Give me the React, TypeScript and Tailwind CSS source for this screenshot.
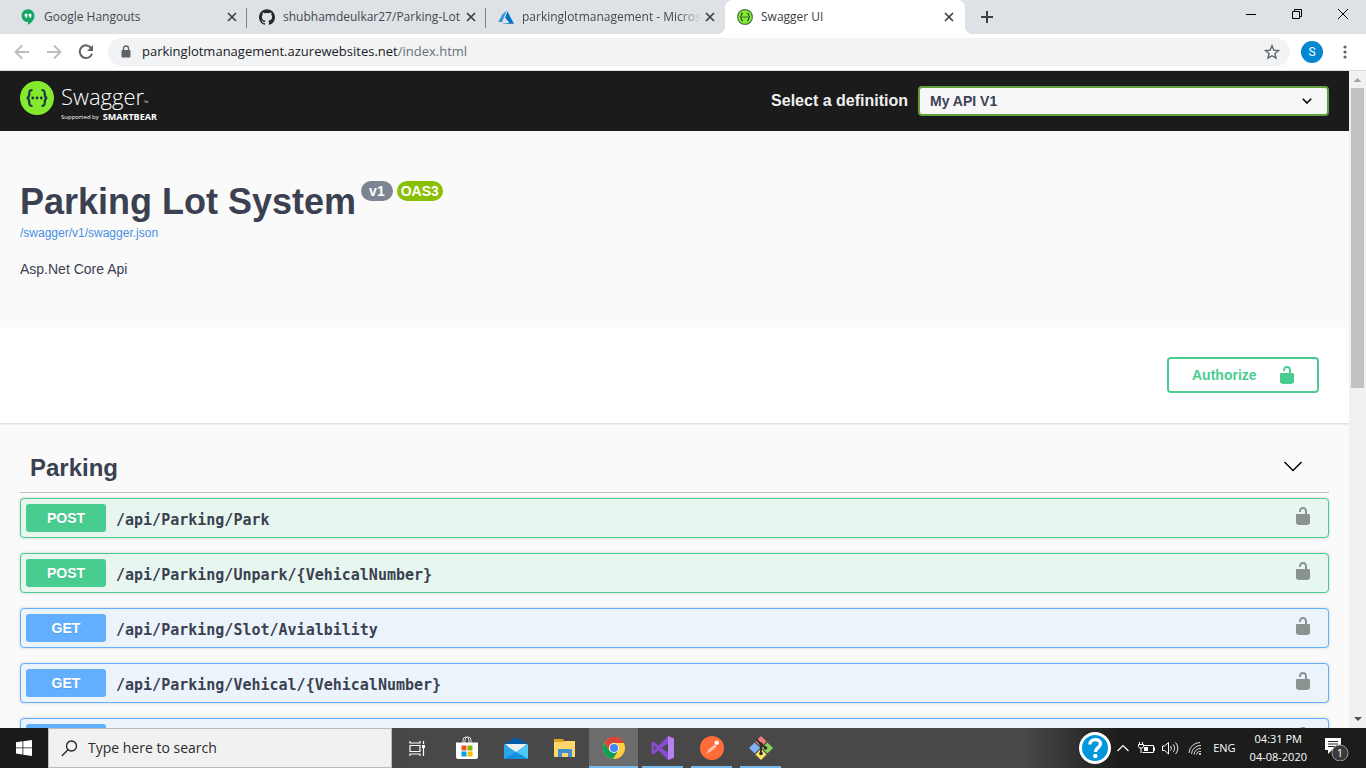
import React from "react";
import { SiGithub } from "react-icons/si";

const sans = "font-['Liberation_Sans',Arial,sans-serif]";
const ui = "font-['Open_Sans','Noto_Sans',sans-serif]";

function CloseX() {
  return (
    <svg viewBox="0 0 10 10" className="size-[10px]" fill="none" stroke="#3c4043" strokeWidth="1.7" aria-hidden="true">
      <path d="M1 1 9 9M9 1 1 9" />
    </svg>
  );
}

function HangoutsIcon() {
  return (
    <svg viewBox="0 0 16 16" className="size-4" aria-hidden="true">
      <path d="M8 .3C4.400.3 1.600 3.100 1.600 6.700c0 3.500 2.800 6.300 6.400 6.300V15.700c3.800-1.900 6.400-5 6.400-9C14.400 3.100 11.500.3 8 .3z" fill="#12a564" />
      <path d="M4.700 4.700h2.700v2.800L6.300 9.100H5.300l.8-1.700H4.700zM8.700 4.700h2.700v2.800l-1.100 1.600h-1l.8-1.700H8.700z" fill="#fff" />
    </svg>
  );
}

function AzureIcon() {
  return (
    <svg viewBox="0 0 16 16" className="size-4" aria-hidden="true">
      <path d="M8.800 1.500 4.300 5.400.200 13h3.900z" fill="#3a94d6" />
      <path d="M9.400 2.300 7.200 8.700l4.200 5-7.900 1.100H16z" fill="#0072c6" />
    </svg>
  );
}

function SwaggerMark({ small = false }: { small?: boolean }) {
  return (
    <svg viewBox="0 0 34 34" className={small ? "size-4" : "size-[34px]"} aria-hidden="true">
      <circle cx="17" cy="17" r="17" fill={small ? "#4a7a45" : "#85ea2d"} />
      {small && <circle cx="17" cy="17" r="14.500" fill="#85ea2d" />}
      <g fill="none" stroke="#173647" strokeWidth="2.200">
        <path d="M12.500 9c-3 0-3.200 1-3.200 3.400 0 2.600 0 4.100-2.400 4.600 2.400.5 2.400 2 2.400 4.600 0 2.400.2 3.400 3.200 3.400" />
        <path d="M21.500 9c3 0 3.200 1 3.200 3.400 0 2.600 0 4.100 2.400 4.600-2.400.5-2.400 2-2.400 4.600 0 2.400-.2 3.400-3.200 3.400" />
      </g>
      <g fill="#173647">
        <circle cx="12.700" cy="17" r="1.400" />
        <circle cx="17" cy="17" r="1.400" />
        <circle cx="21.300" cy="17" r="1.400" />
      </g>
    </svg>
  );
}

function Unlock() {
  return (
    <svg viewBox="0 0 20 20" className="size-5" fill="currentColor" aria-hidden="true">
      <path d="M15.800 8H14V5.600C14 2.703 12.665 1 10 1 7.334 1 6 2.703 6 5.600V6h2v-.801C8 3.754 8.797 3 10 3c1.203 0 2 .754 2 2.199V8H4c-.553 0-1 .646-1 1.199V17c0 .549.428 1.139.951 1.307l1.197.387C5.672 18.861 6.550 19 7.100 19h5.800c.549 0 1.428-.139 1.951-.307l1.196-.387c.524-.167.953-.757.953-1.306V9.199C17 8.646 16.352 8 15.800 8z" />
    </svg>
  );
}

function Tab({ icon, title, divider, wide }: { icon: React.ReactNode; title: string; divider?: boolean; wide?: boolean }) {
  return (
    <div className="relative flex w-[239px] items-center pl-3 pr-[10px]">
      {icon}
      <span className={"ml-2 min-w-0 flex-1 overflow-hidden whitespace-nowrap text-xs text-[#45494d] " + (wide ? "[mask-image:linear-gradient(to_right,#000_88%,transparent)]" : "")}>{title}</span>
      <button aria-label={"Close " + title} className="ml-1"><CloseX /></button>
      {divider && <span className="absolute right-0 top-2 h-5 w-px bg-[#80868b]" />}
    </div>
  );
}

function BrowserChrome() {
  return (
    <header className={ui + " shrink-0"}>
      <div className="flex h-[34px] bg-[#dee1e6] pl-2">
        <Tab icon={<HangoutsIcon />} title="Google Hangouts" divider />
        <Tab icon={<SiGithub className="size-4 text-[#24292e]" />} title="shubhamdeulkar27/Parking-Lot" divider />
        <Tab icon={<AzureIcon />} title="parkinglotmanagement - Microsoft Azure" wide />
        <div className="relative flex w-[240px] items-center rounded-t-lg bg-white pl-3 pr-[11px]">
          <span className="absolute -left-2 bottom-0 size-2 bg-[radial-gradient(circle_at_0_0,#dee1e6_8px,#fff_8px)]" />
          <span className="absolute -right-2 bottom-0 size-2 bg-[radial-gradient(circle_at_100%_0,#dee1e6_8px,#fff_8px)]" />
          <SwaggerMark small />
          <span className="ml-2 flex-1 text-xs text-[#3c4043]">Swagger UI</span>
          <button aria-label="Close Swagger UI"><CloseX /></button>
        </div>
        <button aria-label="New tab" className="ml-4 self-center">
          <svg viewBox="0 0 12 12" className="size-3" stroke="#3c4043" strokeWidth="2"><path d="M6 0v12M0 6h12" /></svg>
        </button>
        <div className="ml-auto flex h-7 items-center gap-9 pr-[18px]">
          <button aria-label="Minimize"><svg viewBox="0 0 10 10" className="size-[10px]" stroke="#000"><path d="M0 5.500h10" /></svg></button>
          <button aria-label="Restore"><svg viewBox="0 0 10 10" className="size-[10px]" fill="none" stroke="#000"><path d="M.5 2.500h7v7h-7zM2.500 2.500v-2h7v7h-2" /></svg></button>
          <button aria-label="Close window"><svg viewBox="0 0 10 10" className="size-[10px]" stroke="#000"><path d="M0 0 10 10M10 0 0 10" /></svg></button>
        </div>
      </div>
      <div className="flex h-[37px] items-center border-b border-[#dadce0] bg-white pl-[14px] pr-[14px]">
        <button aria-label="Back" className="mr-4"><svg viewBox="0 0 16 16" className="size-4" fill="none" stroke="#babcbe" strokeWidth="1.800"><path d="M15 8H2M8 1.500 1.500 8 8 14.500" /></svg></button>
        <button aria-label="Forward" className="mr-4"><svg viewBox="0 0 16 16" className="size-4" fill="none" stroke="#babcbe" strokeWidth="1.800"><path d="M1 8h13M8 1.500 14.500 8 8 14.500" /></svg></button>
        <button aria-label="Reload" className="mr-[14px]"><svg viewBox="0 0 16 16" className="size-4" fill="none" stroke="#5f6368" strokeWidth="2"><path d="M13.300 4.200A6.300 6.300 0 1 0 14 9.700" /><path d="M15 1v6H9z" fill="#5f6368" stroke="none" /></svg></button>
        <div className="flex h-7 flex-1 items-center rounded-full bg-[#f1f3f4] pl-3 pr-[10px]">
          <svg viewBox="0 0 12 14" className="h-[14px] w-3" aria-hidden="true"><path d="M3.500 6V3.500a2.500 2.500 0 0 1 5 0V6" fill="none" stroke="#5f6368" strokeWidth="1.400" /><rect x="1.500" y="5" width="9" height="7.500" rx="1" fill="#5f6368" /></svg>
          <span className="ml-[10px] flex-1 text-[13px] text-[#202124]">parkinglotmanagement.azurewebsites.net<span className="text-[#6b6f74]">/index.html</span></span>
          <button aria-label="Bookmark this page"><svg viewBox="0 0 16 16" className="size-4" fill="none" stroke="#5f6368" strokeWidth="1.400"><path d="m8 1.800 1.800 4.300 4.700.4-3.600 3 1.100 4.600L8 11.700l-4 2.400 1.100-4.600-3.600-3 4.700-.4z" /></svg></button>
        </div>
        <button aria-label="Profile" className="ml-[11px] flex size-[22px] items-center justify-center rounded-full bg-[#0288d1] font-['Roboto',sans-serif] text-xs text-white">S</button>
        <button aria-label="Menu" className="ml-[14px] flex w-[15px] justify-center"><svg viewBox="0 0 4 14" className="h-[14px] w-1" fill="#5f6368"><circle cx="2" cy="2" r="1.600" /><circle cx="2" cy="7" r="1.600" /><circle cx="2" cy="12" r="1.600" /></svg></button>
      </div>
    </header>
  );
}

const endpoints = [
  { method: "POST", path: "/api/Parking/Park" },
  { method: "POST", path: "/api/Parking/Unpark/{VehicalNumber}" },
  { method: "GET", path: "/api/Parking/Slot/Avialbility" },
  { method: "GET", path: "/api/Parking/Vehical/{VehicalNumber}" },
  { method: "GET", path: "" },
];

function Endpoint({ method, path }: { method: string; path: string }) {
  const post = method === "POST";
  return (
    <div className={"flex h-10 items-center rounded border px-[5px] shadow-[0_0_3px_rgba(0,0,0,0.19)] " + (post ? "border-[#49cc90] bg-[#e8f6f0]" : "border-[#61affe] bg-[#ebf3fb]")}>
      <span className={"flex h-7 w-20 items-center justify-center rounded-[3px] text-sm font-bold text-white [text-shadow:0_1px_0_rgba(0,0,0,0.1)] " + (post ? "bg-[#49cc90]" : "bg-[#61affe]")}>{method}</span>
      <span className="ml-[10px] flex-1 pt-1 font-['DejaVu_Sans_Mono',monospace] text-[15px] font-bold">{path}</span>
      <button aria-label={"Authorize " + path} className="mr-[10px] pb-1 text-[#8b9391]"><Unlock /></button>
    </div>
  );
}

function SwaggerPage() {
  return (
    <main className={sans + " min-w-0 flex-1 overflow-hidden bg-[#fafafa] text-[#3b4151]"}>
      <div className="flex h-[60px] items-center bg-[#1b1b1b] px-5">
        <a href="#top" className="flex h-10 flex-1 text-white">
          <SwaggerMark />
          <span className={ui + " ml-[7px] flex flex-col gap-[5px] pt-1"}>
            <span className="flex items-baseline text-[22px] leading-[22px] font-light">Swagger<span className="text-[6px] leading-none">™</span></span>
            <span className="flex h-[10px] items-center gap-1 text-[6px] leading-[10px]">Supported by <b className="text-[9px]">SMARTBEAR</b></span>
          </span>
        </a>
        <label htmlFor="definition" className="mr-[10px] text-base font-bold">
          <span className="text-[#f0f0f0]">Select a definition</span>
        </label>
        <div className="relative w-[411px]">
          <select id="definition" className="h-[30px] w-full appearance-none rounded border-2 border-[#62a03f] bg-[#f7f7f7] pl-[10px] text-sm font-bold">
            <option>My API V1</option>
          </select>
          <svg viewBox="0 0 10 6" className="pointer-events-none absolute right-[17px] top-3 h-[6px] w-[10px]" fill="none" stroke="#000" strokeWidth="1.600"><path d="m.8.8 4.200 4.200L9.200.8" /></svg>
        </div>
      </div>
      <section className="h-[196px] px-5 pt-[50px]">
        <div className="flex items-start">
          <h1 className="pt-px text-4xl font-bold">Parking Lot System</h1>
          <span className="ml-[5px] h-5 rounded-full bg-[#7d8492] px-2 text-sm font-bold text-white">v1</span>
          <span className="ml-1 h-5 rounded-full bg-[#89bf04] px-1 text-sm font-bold text-white">OAS3</span>
        </div>
        <a href="#spec" className="mt-[3px] block text-xs text-[#4990e2]">/swagger/v1/swagger.json</a>
        <p className="mt-[18px] text-sm">Asp.Net Core Api</p>
      </section>
      <section className="flex h-24 items-center justify-end bg-white px-[30px] shadow-[0_1px_2px_rgba(0,0,0,0.15)]">
        <button className="flex h-9 w-[152px] items-center justify-between rounded border-2 border-[#49cc90] pl-[23px] pr-5 text-sm font-bold text-[#49cc90]">Authorize <Unlock /></button>
      </section>
      <section className="px-5 pt-5">
        <div className="flex h-[50px] items-center border-b border-[#bfc0c2] pl-[10px] pr-[26px]">
          <h2 className="flex-1 text-2xl font-bold">Parking</h2>
          <button aria-label="Collapse Parking"><svg viewBox="0 0 20 20" className="size-5" fill="none" stroke="#000" strokeWidth="1.500"><path d="m1.500 4 8.500 8.500L18.500 4" /></svg></button>
        </div>
        <div className="mt-[5px] flex flex-col gap-[15px]">
          {endpoints.map((e, i) => <Endpoint key={i} {...e} />)}
        </div>
      </section>
    </main>
  );
}

function Scrollbar() {
  return (
    <div className="flex w-[17px] flex-col items-center justify-between bg-[#f1f1f1]" aria-hidden="true">
      <div className="flex h-full w-full flex-col items-center">
        <svg viewBox="0 0 17 17" className="size-[17px] shrink-0"><path d="m8.500 7 4 4h-8z" fill="#a3a3a3" /></svg>
        <div className="h-[300px] w-[13px] bg-[#c1c1c1]" />
      </div>
      <svg viewBox="0 0 17 17" className="size-[17px] shrink-0"><path d="m5 6h8l-4 4z" fill="#505050" /></svg>
    </div>
  );
}

function AppButton({ label, running, active, children }: { label: string; running?: boolean; active?: boolean; children: React.ReactNode }) {
  return (
    <button aria-label={label} className={"relative flex w-[49px] items-center justify-center " + (active ? "bg-white/20" : "")}>
      {children}
      {running && <span className={"absolute bottom-0 h-[2px] bg-[#76b9ed] " + (active ? "inset-x-0" : "inset-x-1")} />}
    </button>
  );
}

function Taskbar() {
  return (
    <footer className={ui + " flex h-10 shrink-0 bg-[linear-gradient(to_right,#1b1b1b_3%,#484848_30%,#484848_75%,#1c1c1c_82%)] text-white"}>
      <button aria-label="Start" className="flex w-12 items-center justify-center bg-[#1b1b1b]">
        <svg viewBox="0 0 16 16" className="size-4" fill="#fff"><path d="M0 2.300 6.500 1.300V7.500H0zM7.300 1.200 16 0v7.500H7.300zM0 8.300h6.500v6.200L0 13.600zM7.300 8.300H16V16l-8.700-1.300z" /></svg>
      </button>
      <label className="mr-px flex w-[344px] items-center border border-[#bcbcbc] bg-[#f1f1f1] pl-3">
        <svg viewBox="0 0 17 17" className="size-[17px]" fill="none" stroke="#222" strokeWidth="1.300"><circle cx="10.500" cy="6" r="5" /><path d="M7 9.800.8 16" /></svg>
        <input aria-label="Search" placeholder="Type here to search" className="ml-[10px] min-w-0 flex-1 bg-transparent text-sm placeholder:text-[#2b2b2b]" />
      </label>
      <AppButton label="Task View">
        <svg viewBox="0 0 17 17" className="size-[17px]" fill="none" stroke="#fff" strokeWidth="1.200"><path d="M1 1v2h10V1M1 16v-2h10v2M1 5.500h10v6H1zM14.500 1v3M14.500 8v8" /><path d="M13 5h3v3h-3z" fill="#fff" stroke="none" /></svg>
      </AppButton>
      <AppButton label="Microsoft Store">
        <svg viewBox="0 0 24 24" className="size-6"><path d="M8 7V4a3 3 0 0 1 6 0v3M10 7V4a3 3 0 0 1 6 0v3" fill="none" stroke="#ddd" /><path d="M1 6.500h22V21a2 2 0 0 1-2 2H3a2 2 0 0 1-2-2z" fill="#fff" /><path d="M6.500 9.500h5v5h-5z" fill="#f25022" /><path d="M12.500 9.500h5v5h-5z" fill="#7fba00" /><path d="M6.500 15.500h5v5h-5z" fill="#00a4ef" /><path d="M12.500 15.500h5v5h-5z" fill="#ffb900" /></svg>
      </AppButton>
      <AppButton label="Mail">
        <svg viewBox="0 0 24 24" className="size-6"><path d="M0 8 12 1l12 7v3H0z" fill="#0358a7" /><path d="M1 8h22l-9 8H9z" fill="#eee" /><path d="M0 8l12 8L24 8v15H0z" fill="#28a8ea" /><path d="m24 8-12 8 12 7z" fill="#50c9f5" /><path d="M0 23 12 16l12 7z" fill="#1490df" /></svg>
      </AppButton>
      <AppButton label="File Explorer">
        <svg viewBox="0 0 24 24" className="size-6"><path d="M1 3h9l1 2h11v5H1z" fill="#dca51d" /><path d="M1 6h9l2-1h10v16H1z" fill="#ffd76a" /><path d="M5 21v-8h14v8h-4v-4H9v4z" fill="#3f8fd2" /></svg>
      </AppButton>
      <AppButton label="Chrome" running active>
        <svg viewBox="0 0 24 24" className="size-6"><circle cx="12" cy="12" r="11" fill="#ffcd40" /><path d="M2.500 6.500A11 11 0 0 0 11 23l5.200-8.500-4.200 2.500-4.600-2.500z" fill="#0f9d58" /><path d="M2.500 6.500A11 11 0 0 1 22 7H12a5 5 0 0 0-4.600 7.300z" fill="#db4437" /><circle cx="12" cy="12" r="5" fill="#f1f1f1" /><circle cx="12" cy="12" r="4" fill="#4285f4" /></svg>
      </AppButton>
      <AppButton label="Visual Studio" running>
        <svg viewBox="0 0 24 24" className="size-6"><path d="M17 0 7.500 9.500 2.500 5.600.5 6.600v10.800l2 1 5-3.900L17 24l6-2.500v-19zM3 9.200 5.500 12 3 14.800zM17 7.200v9.600L10.800 12z" fill="#8a4bcc" fillRule="evenodd" /><path d="m17 0 6 2.500v19L17 24z" fill="#b583ef" /></svg>
      </AppButton>
      <AppButton label="Postman" running>
        <svg viewBox="0 0 24 24" className="size-6"><circle cx="12" cy="12" r="12" fill="#ff6c37" /><path d="m5.500 18.500 3.500-5 5.500-4.800 2 1.800-6 5z" fill="#ffe3d8" /><path d="m5.500 18.500 9-8" stroke="#ff6c37" strokeWidth=".6" /><circle cx="16.700" cy="6.800" r="2.300" fill="#fff" /></svg>
      </AppButton>
      <AppButton label="Git Bash" running>
        <svg viewBox="0 0 24 24" className="size-6"><path d="m12 0 5.600 5.600L12 11.200 6.400 5.600z" fill="#f47c7c" /><path d="m18.400 6.400 5.600 5.600-5.600 5.600-5.600-5.600z" fill="#8cd05f" /><path d="m5.600 6.400 5.600 5.600-5.600 5.600L0 12z" fill="#80b0f5" /><path d="m12 12.800 5.600 5.600L12 24l-5.600-5.600z" fill="#ffe06a" /><path d="m7.500 3.500 4.500 4.500v10M12 8l5 4" fill="none" stroke="#2b2b2b" strokeWidth="1.800" /><circle cx="12" cy="8" r="1.800" fill="#2b2b2b" /><circle cx="16.500" cy="12" r="1.800" fill="#2b2b2b" /><circle cx="12" cy="17.500" r="1.800" fill="#2b2b2b" /></svg>
      </AppButton>
      <div className="ml-auto flex items-center">
        <button aria-label="Help"><svg viewBox="0 0 32 32" className="size-8"><circle cx="16" cy="16" r="14.500" fill="#0096db" stroke="#fff" strokeWidth="3" /><path d="M11 12.500c0-6.500 10.500-6.300 10.500-.8 0 4-5 4-5 8.300" fill="none" stroke="#fff" strokeWidth="3.400" /><circle cx="16.300" cy="24" r="2.200" fill="#fff" /></svg></button>
        <button aria-label="Hidden icons" className="ml-[6px]"><svg viewBox="0 0 12 8" className="h-2 w-3" fill="none" stroke="#fff" strokeWidth="1.200"><path d="m.5 7 5.500-5.500L11.500 7" /></svg></button>
        <svg viewBox="0 0 17 14" className="ml-[9px] h-[14px] w-[17px]" fill="none" stroke="#fff"><path d="M5.500 4.500h10v7H4.500M15.500 6.500h1v3h-1M1.500 1v2M4.500 1v2M.5 3.500h5v2l-1 1.500h-3L.5 5.500zM3 7v5" /><path d="M6 6h4v4H6z" fill="#fff" stroke="none" /></svg>
        <svg viewBox="0 0 17 14" className="ml-[7px] h-[14px] w-[17px]" fill="none" stroke="#fff"><path d="M.5 5v4.500h2.200L6.500 13V1.500L2.700 5zM8.500 5c1 1.300 1 3.200 0 4.500M11 3.300c2 2.200 2 5.700 0 7.900M13.500 1.500c3 3.300 3 8.200 0 11.500" /></svg>
        <svg viewBox="0 0 14 14" className="ml-[9px] size-[14px]" fill="none" stroke="#ddd"><path d="M1 12A11 11 0 0 1 12 1.500M3.500 13A9 9 0 0 1 13 4.500M6 13.500A6.500 6.500 0 0 1 13 7.500M8.500 13.500A4 4 0 0 1 13 10.500" /><circle cx="12" cy="13" r="1" fill="#fff" stroke="none" /></svg>
        <span className="ml-[11px] text-[11px]">ENG</span>
        <div className="ml-[14px] text-center text-[11px] leading-[18px]">
          <div>04:31 PM</div>
          <div>04-08-2020</div>
        </div>
        <button aria-label="Notifications" className="ml-4 mr-[17px]"><svg viewBox="0 0 26 26" className="size-[26px]"><path d="M2 3h16v12H9l-4 4v-4H2z" fill="#fff" /><path d="M5 6.500h10M5 9h10M5 11.500h7" stroke="#222" /><circle cx="17" cy="18" r="8" fill="#3a3a3a" stroke="#999" /><text x="17" y="22" textAnchor="middle" fill="#fff" fontSize="11">1</text></svg></button>
      </div>
    </footer>
  );
}

export default function App() {
  return (
    <div className="flex h-screen flex-col overflow-hidden">
      <BrowserChrome />
      <div className="flex min-h-0 flex-1">
        <SwaggerPage />
        <Scrollbar />
      </div>
      <Taskbar />
    </div>
  );
}
